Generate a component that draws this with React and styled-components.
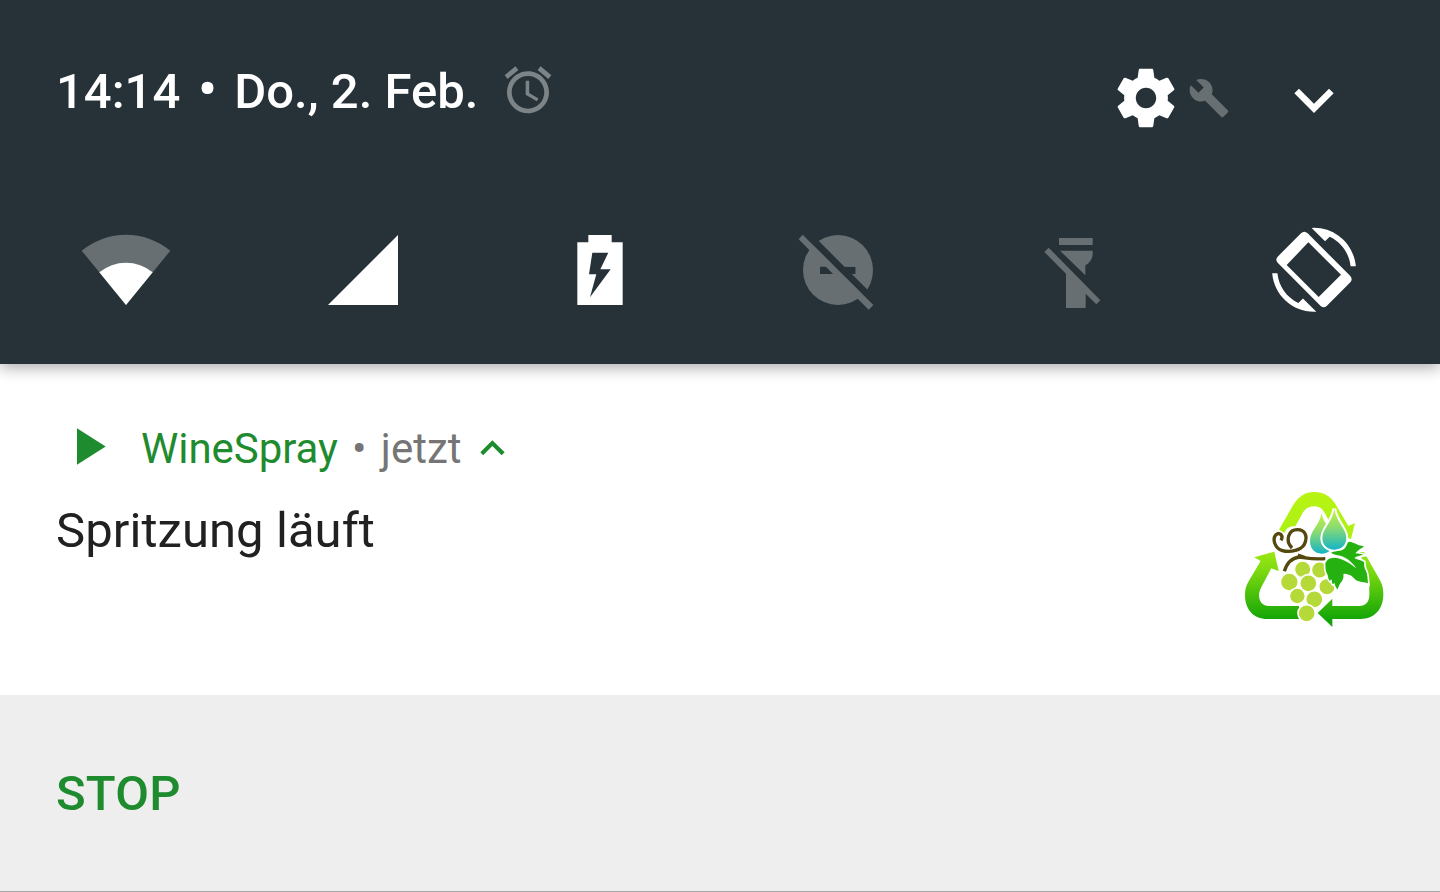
import React from "react";
import styled, { createGlobalStyle } from "styled-components";

const GlobalStyle = createGlobalStyle`
  * { box-sizing: border-box; }
  body {
    margin: 0;
    background: #fff;
    font-family: Roboto, "Liberation Sans", sans-serif;
    overflow: hidden;
  }
  svg { display: block; flex: none; }
`;

const SURFACE = "#263238";
const DIM = "#686f72";
const GREEN = "#1f8b2f";

const Shade = styled.main`
  width: 1440px;
  height: 892px;
  display: flex;
  flex-direction: column;
  overflow: hidden;
`;

const Header = styled.header`
  position: relative;
  z-index: 1;
  flex: none;
  height: 364px;
  background: ${SURFACE};
  box-shadow: 0 4px 14px rgba(0, 0, 0, 0.32);
  display: flex;
  flex-direction: column;
`;

const StatusRow = styled.div`
  display: flex;
  align-items: flex-start;
  padding: 62px 106px 0 56px;
  height: 225px;
`;

const Clock = styled.div`
  display: flex;
  align-items: baseline;
  width: 444px;
  padding-top: 1px;
  color: #fff;
  font-size: 49px;
  font-weight: 500;
  line-height: 58px;
  white-space: pre;
`;

const Dot = styled.span`
  width: ${(p) => p.$width}px;
  font-size: ${(p) => p.$size}px;
  line-height: 1;
  text-align: center;
`;

const Controls = styled.div`
  display: flex;
  align-items: center;
  height: 72px;
  margin-left: auto;
`;

const GearSlot = styled.div`
  margin-right: 7px;
`;

const WrenchSlot = styled.div`
  margin-right: 64px;
`;

const ChevronSlot = styled.div`
  padding-top: 6px;
`;

const Tiles = styled.div`
  display: flex;
  gap: 147px;
  padding-left: 81px;
`;

const Notification = styled.section`
  flex: none;
  height: 331px;
  display: flex;
  justify-content: space-between;
  background: #fff;
  padding: 60px 40px 0 56px;
`;

const Message = styled.div`
  display: flex;
  flex-direction: column;
`;

const AppLine = styled.div`
  display: flex;
  align-items: center;
  height: 50px;
  padding-left: 21px;
  font-size: 42px;
  line-height: 50px;
  white-space: pre;
`;

const PlaySlot = styled.div`
  margin-bottom: 6px;
`;

const AppName = styled.span`
  color: ${GREEN};
  margin-left: 35px;
  letter-spacing: -0.05px;
`;

const When = styled.span`
  display: flex;
  align-items: baseline;
  color: #757575;
  margin-right: 19px;
`;

const CollapseSlot = styled.div`
  margin-bottom: 2px;
`;

const Title = styled.div`
  margin-top: 28px;
  color: #212121;
  font-size: 49px;
  line-height: 58px;
  letter-spacing: 0.07px;
`;

const LogoSlot = styled.div`
  padding-top: 56px;
`;

const Actions = styled.footer`
  flex: none;
  height: 197px;
  padding: 70px 56px 0;
  background: #eee;
  border-bottom: 1px solid #a6a6a6;
`;

const ActionButton = styled.button`
  display: block;
  border: 0;
  padding: 0;
  background: none;
  color: ${GREEN};
  font-family: inherit;
  font-size: 49px;
  font-weight: 500;
  line-height: 58px;
  letter-spacing: 0.2px;
`;

const Tile = ({ x, children }) => (
  <svg width="90" height="90" viewBox={`${x} 30 270 270`}>{children}</svg>
);

const AlarmIcon = () => (
  <svg width="56" height="56" viewBox="0 0 24 24" fill="#7d8487">
    <path d="M22 5.72l-4.6-3.86-1.29 1.53 4.6 3.86L22 5.72zM7.88 3.39L6.6 1.86 2 5.71l1.29 1.53 4.59-3.85zM12.5 8H11v6l4.75 2.85.75-1.23-4-2.37V8zM12 4c-4.97 0-9 4.03-9 9s4.02 9 9 9c4.97 0 9-4.03 9-9s-4.03-9-9-9zm0 16c-3.87 0-7-3.13-7-7s3.13-7 7-7 7 3.13 7 7-3.13 7-7 7z" />
  </svg>
);

const GearIcon = () => (
  <svg width="70" height="70" viewBox="0 0 24 24" fill="#fff">
    <path d="M19.43 12.98c.04-.32.07-.64.07-.98s-.03-.66-.07-.98l2.11-1.65c.19-.15.24-.42.12-.64l-2-3.46c-.12-.22-.39-.3-.61-.22l-2.49 1c-.52-.4-1.08-.73-1.69-.98l-.38-2.65C14.46 2.18 14.25 2 14 2h-4c-.25 0-.46.18-.49.42l-.38 2.65c-.61.25-1.17.59-1.69.98l-2.49-1c-.23-.09-.49 0-.61.22l-2 3.46c-.13.22-.07.49.12.64l2.11 1.65c-.04.32-.07.65-.07.98s.03.66.07.98l-2.11 1.65c-.19.15-.24.42-.12.64l2 3.46c.12.22.39.3.61.22l2.49-1c.52.4 1.08.73 1.69.98l.38 2.65c.03.24.24.42.49.42h4c.25 0 .46-.18.49-.42l.38-2.65c.61-.25 1.17-.59 1.69-.98l2.49 1c.23.09.49 0 .61-.22l2-3.46c.12-.22.07-.49-.12-.64l-2.11-1.65zM12 15.5c-1.93 0-3.5-1.57-3.5-3.5s1.57-3.5 3.5-3.5 3.5 1.57 3.5 3.5-1.57 3.5-3.5 3.5z" />
  </svg>
);

const WrenchIcon = () => (
  <svg width="42" height="42" viewBox="0 0 24 24" fill={DIM}>
    <path d="M22.7 19l-9.1-9.1c.9-2.3.4-5-1.5-6.9-2-2-5-2.4-7.4-1.3L9 6 6 9 1.6 4.7C.4 7.1.9 10.1 2.9 12.1c1.9 1.9 4.6 2.4 6.9 1.5l9.1 9.1c.4.4 1 .4 1.4 0l2.3-2.3c.5-.4.5-1.1.1-1.4z" />
  </svg>
);

const ChevronDown = () => (
  <svg width="40" height="26" viewBox="0 0 120 78" fill="#fff">
    <path d="M1 16 15 2 60 47 105 2 119 16 60 75z" />
  </svg>
);

const ChevronUp = () => (
  <svg width="25" height="16" viewBox="-1 -1 75 48" fill={GREEN}>
    <path d="M36 0 73 36 64 45 36 17 8.500 45 0 36z" />
  </svg>
);

const PlayIcon = () => (
  <svg width="29" height="37" viewBox="0 0 87 111" fill={GREEN}>
    <path d="M0 1 86 55.500 0 110z" />
  </svg>
);

const Logo = () => (
  <svg width="170" height="160" viewBox="0 0 510 480">
    <defs>
      <linearGradient id="ring" gradientUnits="userSpaceOnUse" x1="0" y1="36" x2="0" y2="418">
        <stop offset="0" stopColor="#b8f414" />
        <stop offset="0.38" stopColor="#aaf012" />
        <stop offset="0.6" stopColor="#82dc10" />
        <stop offset="1" stopColor="#13a507" />
      </linearGradient>
      <linearGradient id="drop" x1="0" y1="0" x2="0" y2="1">
        <stop offset="0.1" stopColor="#b9ec4c" />
        <stop offset="0.45" stopColor="#8bdc70" />
        <stop offset="1" stopColor="#16b4c6" />
      </linearGradient>
    </defs>
    <g fill="url(#ring)">
      <path d="M147 149 189 76C205 49 226 36 253 36C281 36 303 49 318 75L355 138 375 129 363 177 320 165 297 122 283 97C276 85 267 79 252 79C237 79 226 85 218 99L196 139C180 137 167 145 164 159z" />
      <path d="M73 232 133 215 146 273 124 265 93 323C80 349 89 378 118 378H207V417H113C68 417 45 386 45 345C45 328 48 318 56 304L92 243z" />
      <path d="M263 399 307 356V378H388C407 378 418 365 418 345V320L390 216H402L450 301C457 314 460 326 460 343C460 389 432 417 392 417H307V441z" />
    </g>
    <path d="M275 100C279 133 312 151 312 184C312 208 296 221 275 221C254 221 240 206 240 184C240 151 268 137 275 100z" fill="url(#drop)" />
    <path d="M313 86C318 125 349 145 349 174C349 196 333 209 313 209C293 209 277 196 277 174C277 145 308 125 313 86z" fill="url(#drop)" stroke="#fff" strokeWidth="12" paintOrder="stroke" />
    <g fill="none" strokeLinejoin="round">
      <path d="M153 181C162 166 148 155 138 164C125 178 136 205 155 211C183 220 214 209 223 193C235 167 224 149 202 149C176 149 164 181 186 204" stroke="#fff" strokeWidth="19" />
      <path d="M153 181C162 166 148 155 138 164C125 178 136 205 155 211C183 220 214 209 223 193C235 167 224 149 202 149C176 149 164 181 186 204" stroke="#54480f" strokeWidth="10" />
      <path d="M163 274C171 248 187 233 209 231C230 234 250 239 286 236" stroke="#54480f" strokeWidth="10" />
      <path d="M204 224 226 231" stroke="#54480f" strokeWidth="7" />
    </g>
    <g fill="#b4d938" stroke="#fff" strokeWidth="5">
      <circle cx="218" cy="268" r="25" />
      <circle cx="269" cy="270" r="25" />
      <circle cx="291" cy="320" r="25" />
      <circle cx="235" cy="310" r="26" />
      <circle cx="178" cy="306" r="27" />
      <circle cx="202" cy="348" r="24" />
      <circle cx="253" cy="358" r="26" />
      <circle cx="230" cy="400" r="26" />
    </g>
    <path d="M303 218C320 210 337 217 347 201C353 192 350 186 360 185C376 189 384 197 401 198C397 206 386 207 376 220C385 222 393 221 401 225C391 226 380 229 373 234C384 240 393 240 402 246C403 257 402 263 407 271C414 284 412 297 414 310C404 305 395 308 384 303C372 299 371 288 356 284C348 281 341 280 340 283C341 290 341 297 336 303C328 312 326 320 323 328C318 324 315 316 313 308L309 313C304 310 307 303 304 298L300 302C292 295 297 289 291 281C285 272 287 259 286 250C290 240 296 235 307 234C315 233 322 234 330 231C320 227 312 223 303 218z" fill="#25b210" stroke="#fff" strokeWidth="10" paintOrder="stroke" />
    <path d="M304 225C336 225 356 236 376 262C354 244 334 233 304 230z" fill="#fff" stroke="#fff" strokeWidth="2" />
  </svg>
);

export default function App() {
  return (
    <>
      <GlobalStyle />
      <Shade>
        <Header>
          <StatusRow>
            <Clock>
              <span>14:14</span>
              <Dot $width={54} $size={54}>•</Dot>
              <span>Do., 2. Feb.</span>
            </Clock>
            <AlarmIcon />
            <Controls>
              <GearSlot><GearIcon /></GearSlot>
              <WrenchSlot><WrenchIcon /></WrenchSlot>
              <ChevronSlot><ChevronDown /></ChevronSlot>
            </Controls>
          </StatusRow>
          <Tiles>
            <Tile x={63}>
              <path d="M198 270 65 107A210 210 0 0 1 331 107z" fill={DIM} />
              <path d="M198 270 118 172A126 126 0 0 1 278 172z" fill="#fff" />
            </Tile>
            <Tile x={774}>
              <path d="M804 270H1014V60z" fill="#fff" />
            </Tile>
            <Tile x={-15}>
              <path fillRule="evenodd" d="M52 82H85V60H155V82H188V270H52zM97 113 87 178H109L90 247 152 163H121L145 113z" fill="#fff" />
            </Tile>
            <Tile x={696}>
              <circle cx="834" cy="165" r="105" fill={DIM} />
              <path d="M780 155H887V177H780zM727 28 960 261 940 271 720 52z" fill={SURFACE} />
              <path d="M778 79A105 105 0 0 1 922 223L876 177H887V155H854z" fill={DIM} />
              <path d="M728 59 940 270 926 284 716 73z" fill={DIM} />
            </Tile>
            <Tile x={-3}>
              <path d="M87 69H188V90H87zM90 107H188V116C188 132 178 145 166 151V181zM43 111 56 98 211 256 199 268 167 236V279H108V176z" fill={DIM} />
            </Tile>
            <Tile x={708}>
              <g fill="#fff">
                <path fillRule="evenodd" d="M813 55Q823 46 833 55L961 183Q969 193 961 202L890 273Q881 281 872 273L743 143Q735 134 743 125zM835 82 770 150 866 246 933 179z" />
                <path transform="translate(726 38.5) scale(10.5)" d="M16.48 2.52c3.27 1.55 5.61 4.72 5.97 8.48h1.5C23.44 4.84 18.29 0 12 0l-.66.03 3.81 3.81 1.33-1.32zM7.52 21.48C4.25 19.94 1.91 16.76 1.55 13H.05C.56 19.16 5.71 24 12 24l.66-.03-3.81-3.81-1.33 1.32z" />
              </g>
            </Tile>
          </Tiles>
        </Header>
        <Notification>
          <Message>
            <AppLine>
              <PlaySlot><PlayIcon /></PlaySlot>
              <AppName>WineSpray</AppName>
              <When>
                <Dot $width={43} $size={43}>•</Dot>
                <span>jetzt</span>
              </When>
              <CollapseSlot><ChevronUp /></CollapseSlot>
            </AppLine>
            <Title>Spritzung läuft</Title>
          </Message>
          <LogoSlot><Logo /></LogoSlot>
        </Notification>
        <Actions>
          <ActionButton>STOP</ActionButton>
        </Actions>
      </Shade>
    </>
  );
}
